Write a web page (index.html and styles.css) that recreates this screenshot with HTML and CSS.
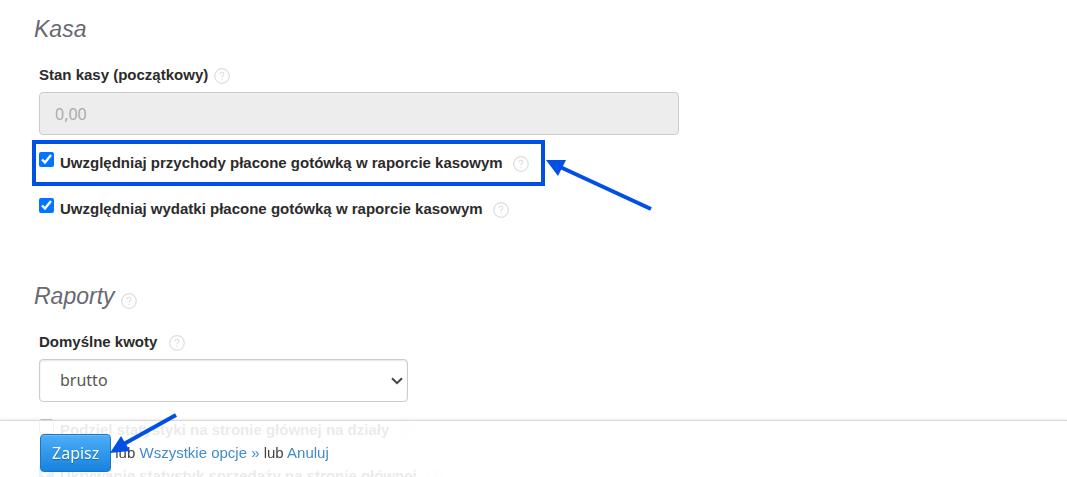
FILE: index.html
```html
<!DOCTYPE html>
<html lang="pl">

<head>
    <meta charset="UTF-8">
    <meta name="viewport" content="width=device-width, initial-scale=1.0">
    <title>Ustawienia</title>
    <link rel="stylesheet" href="styles.css">
</head>

<body>
    <svg class="icons" aria-hidden="true">
        <symbol id="help" viewBox="0 0 16 16">
            <circle cx="8" cy="8" r="7.3" fill="none" stroke="currentColor" stroke-width="1.2" />
            <path d="M6 6.3c0-1.3.9-2 2-2s2 .7 2 1.8c0 1.5-2 1.6-2 3.2M8 10.8v1.2" fill="none" stroke="currentColor" stroke-width="1.1" />
        </symbol>
    </svg>

    <form id="settingsForm">
        <section class="cash">
            <h2>Kasa</h2>
            <div class="field">
                <div class="caption">
                    <label for="balance">Stan kasy (początkowy)</label>
                    <svg class="help"><use href="#help" /></svg>
                </div>
                <input type="text" id="balance" class="text" value="0,00" disabled>
            </div>
            <div class="check marked">
                <input type="checkbox" id="income" checked>
                <label for="income">Uwzględniaj przychody płacone gotówką w raporcie kasowym</label>
                <svg class="help"><use href="#help" /></svg>
                <svg class="arrow arrow-right" viewBox="0 0 106 52">
                    <path d="M12 6L105 49" stroke="#0050e6" stroke-width="4" />
                    <path d="M0 0L20 0L12 16z" fill="#0050e6" />
                </svg>
            </div>
            <div class="check">
                <input type="checkbox" id="expenses" checked>
                <label for="expenses">Uwzględniaj wydatki płacone gotówką w raporcie kasowym</label>
                <svg class="help"><use href="#help" /></svg>
            </div>
        </section>

        <section class="reports">
            <h2>Raporty <svg class="help"><use href="#help" /></svg></h2>
            <div class="field">
                <div class="caption spaced">
                    <label for="amounts">Domyślne kwoty</label>
                    <svg class="help"><use href="#help" /></svg>
                </div>
                <div class="select">
                    <select id="amounts">
                        <option>brutto</option>
                        <option>netto</option>
                    </select>
                    <svg class="chevron" viewBox="0 0 12 8"><path d="M1 1.2L6 6.2L11 1.2" fill="none" stroke="#444" stroke-width="2" /></svg>
                </div>
            </div>
            <div class="check">
                <input type="checkbox" id="split">
                <label for="split">Podziel statystyki na stronie głównej na działy</label>
                <svg class="help"><use href="#help" /></svg>
            </div>
            <div class="check">
                <input type="checkbox" id="hide" checked>
                <label for="hide">Ukrywanie statystyk sprzedaży na stronie głównej</label>
                <svg class="help"><use href="#help" /></svg>
            </div>
        </section>

        <div class="actions">
            <button type="submit">Zapisz</button>
            <span>lub <a href="#">Wszystkie opcje »</a> lub <a href="#">Anuluj</a></span>
            <svg class="arrow arrow-save" viewBox="0 0 68 42">
                <path d="M66 2L12 32" stroke="#0050e6" stroke-width="4" />
                <path d="M0 40L11 23L20 38z" fill="#0050e6" />
            </svg>
        </div>
    </form>
</body>

</html>
```

FILE: styles.css
```css
body {
    font-family: 'Liberation Sans', Arial, sans-serif;
    font-size: 15px;
    color: #444;
    background-color: #fff;
    margin: 0;
    height: 100vh;
    overflow: hidden;
}

form {
    padding: 13px 32px 0;
}

.icons {
    display: none;
}

h2 {
    display: flex;
    align-items: center;
    gap: 6px;
    margin: 0 0 18px 2px;
    font-size: 23px;
    line-height: 32px;
    font-weight: normal;
    font-style: italic;
    color: #666a70;
}

h2 .help {
    margin-top: 10px;
}

label {
    font-weight: bold;
    color: #2b2b2b;
}

.help {
    width: 16px;
    height: 16px;
    flex: none;
    color: #ddd;
}

.field {
    padding: 0 7px;
}

.caption {
    display: flex;
    align-items: center;
    gap: 6px;
    height: 22px;
    margin-bottom: 7px;
}

.caption .help,
.check .help {
    margin-top: 4px;
}

.spaced {
    gap: 12px;
}

.text,
select {
    display: block;
    box-sizing: border-box;
    width: 100%;
    height: 43px;
    border: 1px solid #ccc;
    border-radius: 4px;
    font-family: 'Noto Sans', sans-serif;
    font-size: 16px;
}

.text {
    max-width: 640px;
    padding: 0 15px;
    background-color: #ededed;
    color: #aaa;
}

.select {
    position: relative;
    max-width: 369px;
}

select {
    appearance: none;
    padding: 0 20px 2px;
    background-color: #fff;
    box-shadow: inset 0 1px 2px #e4e4e4;
    color: #555;
}

.chevron {
    position: absolute;
    right: 5px;
    top: 18px;
    width: 12px;
    height: 8px;
    pointer-events: none;
}

.check {
    display: flex;
    align-items: center;
    width: fit-content;
    height: 46px;
    box-sizing: border-box;
    padding: 0 12px 2px 7px;
}

.check input {
    width: 15px;
    height: 15px;
    margin: 0 6px 6px 0;
    accent-color: #0075ff;
}

.check .help {
    margin-left: 10px;
}

.marked {
    position: relative;
    margin-top: 5px;
    padding: 0 12px 2px 3px;
    border: 4px solid #0050e6;
}

.reports {
    margin-top: 48px;
}

.reports .check {
    margin-top: 5px;
}

.reports .check + .check {
    margin-top: 0;
}

.arrow {
    position: absolute;
}

.arrow-right {
    left: 100%;
    top: 16px;
    width: 106px;
    height: 52px;
    margin-left: 5px;
}

.actions {
    position: fixed;
    left: 0;
    right: 0;
    bottom: 0;
    display: flex;
    align-items: center;
    gap: 4px;
    height: 57px;
    box-sizing: border-box;
    padding: 8px 40px 0;
    border-top: 1px solid #d8d8d8;
    box-shadow: 0 -1px 3px #eee;
    background-color: rgba(255, 255, 255, 0.9);
}

.actions span {
    padding-bottom: 2px;
}

.actions a {
    color: #428bca;
    text-decoration: none;
}

button {
    height: 38px;
    padding: 0 11px;
    border: 1px solid #1a78c2;
    border-radius: 4px;
    background: linear-gradient(#4fadf8, #1683df);
    box-shadow: inset 0 1px 0 #6dbbf8;
    color: #fff;
    font-family: 'Noto Sans', sans-serif;
    font-size: 16px;
    text-shadow: 0 1px 1px #1668ac;
    cursor: pointer;
}

.arrow-save {
    left: 110px;
    top: -8px;
    width: 68px;
    height: 42px;
}
```
